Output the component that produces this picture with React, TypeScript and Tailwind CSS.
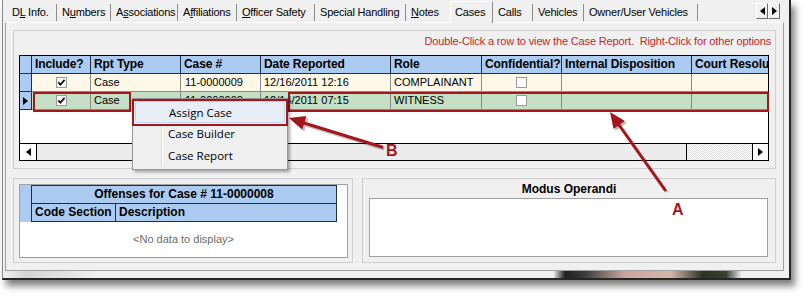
import React from 'react';

const RED = '#a3161c';

const tabs: { w: string; label: React.ReactNode; active?: boolean; noSep?: boolean }[] = [
  { w: 'w-[50px]', label: <>D<u>L</u> Info.</> },
  { w: 'w-[54px]', label: <>N<u>u</u>mbers</> },
  { w: 'w-[67px]', label: <>A<u>s</u>sociations</> },
  { w: 'w-[59px]', label: <>A<u>f</u>filiations</> },
  { w: 'w-[78px]', label: <><u>O</u>fficer Safety</> },
  { w: 'w-[91px]', label: <>Special Handling</> },
  { w: 'w-[44px]', label: <><u>N</u>otes</>, noSep: true },
  { w: 'w-[43px]', label: <>Cases</>, active: true },
  { w: 'w-[40px]', label: <>Calls</> },
  { w: 'w-[51px]', label: <>Vehicles</> },
  { w: 'w-[114px]', label: <>Owner/User Vehicles</> },
];

const headers = ['Include?', 'Rpt Type', 'Case #', 'Date Reported', 'Role', 'Confidential?', 'Internal Disposition', 'Court Resolu'];

const rows = [
  { bg: 'bg-[#fdf8e7]', current: false, type: 'Case', num: '11-0000009', date: '12/16/2011 12:16', role: 'COMPLAINANT' },
  { bg: 'bg-[#c5dfc4]', current: true, type: 'Case', num: '11-0000008', date: '12/14/2011 07:15', role: 'WITNESS' },
];

const cols = 'grid grid-cols-[12px_59px_90px_80px_130px_91px_80px_130px_76px]';

const Check = ({ checked }: { checked: boolean }) => (
  <div className="w-[11px] h-[11px] border border-[#9a9a9a] bg-white flex items-center justify-center">
    {checked && (
      <svg width="9" height="9" viewBox="0 0 9 9">
        <path d="M1.3 4.3 L3.4 6.6 L7.6 1.8" stroke="#111" strokeWidth="1.8" fill="none" />
      </svg>
    )}
  </div>
);

const Tri = ({ dir, size = 4 }: { dir: 'l' | 'r'; size?: number }) => (
  <svg width={size + 1} height={size * 2} viewBox={`0 0 ${size + 1} ${size * 2}`}>
    {dir === 'r' ? (
      <path d={`M0 0 L${size + 1} ${size} L0 ${size * 2} Z`} fill="#000" />
    ) : (
      <path d={`M${size + 1} 0 L0 ${size} L${size + 1} ${size * 2} Z`} fill="#000" />
    )}
  </svg>
);

const App: React.FC = () => {
  return (
    <div className="relative w-[812px] h-[299px] bg-white overflow-hidden pl-[2px] font-['Liberation_Sans',Arial,sans-serif] text-[11px] text-black">
      {/* window */}
      <div className="flex flex-col w-[789px] h-[280px] bg-[#f0f0f0] border-l border-[#8a8a8a] border-r-2 border-b-2 border-r-[#262626] border-b-[#262626] shadow-[4px_6px_7px_rgba(0,0,0,0.5)]">
        {/* tab strip */}
        <div className="h-[22px] shrink-0 flex items-end pl-[4px] pr-[9px] tracking-[-0.2px]">
          {tabs.map((t, i) =>
            t.active ? (
              <div
                key={i}
                className={`${t.w} relative z-10 h-[22px] -mb-px bg-[#f0f0f0] border-l border-t border-white border-r border-r-[#8c8c8c] pl-[4px] pt-[3px] leading-[14px] whitespace-nowrap`}
              >
                {t.label}
              </div>
            ) : (
              <div
                key={i}
                className={`${t.w} h-[17px] mb-px pl-[5px] leading-[16px] whitespace-nowrap ${t.noSep ? '' : 'border-r border-[#8c8c8c]'}`}
              >
                {t.label}
              </div>
            )
          )}
          <div className="ml-auto self-start mt-[3px] flex">
            <div className="w-[12px] h-[16px] bg-[#f0f0f0] border border-white border-r-[#6a6a6a] border-b-[#6a6a6a] flex items-center justify-center">
              <Tri dir="l" />
            </div>
            <div className="w-[12px] h-[16px] bg-[#f0f0f0] border border-white border-r-[#6a6a6a] border-b-[#6a6a6a] flex items-center justify-center">
              <Tri dir="r" />
            </div>
          </div>
        </div>

        {/* tab page */}
        <div className="h-[249px] w-[779px] ml-[2px] shrink-0 border border-[#a0a0a0] border-t-white flex flex-col pt-[7px] pl-[7px]">
          {/* cases group */}
          <div className="w-[763px] h-[139px] border border-[#cfcfcf] pt-[4px] pl-[5px] pr-[4px] flex flex-col">
            <div className="h-[13px] leading-[13px] text-right text-[#c1272d] tracking-[-0.15px]">
              Double-Click a row to view the Case Report.&nbsp; Right-Click for other options
            </div>
            <div className="mt-[7px] w-[750px] h-[106px] border border-black bg-white flex flex-col">
              <div className={`${cols} h-[18px]`}>
                <div className="bg-[#abcbf1] border-r border-b border-[#1f2d4d]" />
                {headers.map((h) => (
                  <div
                    key={h}
                    className="bg-[#abcbf1] border-r border-b border-[#1f2d4d] last:border-r-0 pl-[3px] font-bold text-[12px] tracking-[-0.1px] leading-[17px] whitespace-nowrap"
                  >
                    {h}
                  </div>
                ))}
              </div>
              {rows.map((r) => (
                <div key={r.num} className={`${cols} h-[18px]`}>
                  <div className="bg-[#abcbf1] border-r border-b border-[#1f2d4d] flex items-center pl-[3px]">
                    {r.current && <Tri dir="r" />}
                  </div>
                  <div className={`${r.bg} border-r border-b border-[#8a8a8a] flex items-center justify-center`}>
                    <Check checked />
                  </div>
                  <div className={`${r.bg} border-r border-b border-[#8a8a8a] px-[3px] leading-[17px]`}>{r.type}</div>
                  <div className={`${r.bg} border-r border-b border-[#8a8a8a] px-[4px] leading-[17px]`}>{r.num}</div>
                  <div className={`${r.bg} border-r border-b border-[#8a8a8a] px-[3px] leading-[17px]`}>{r.date}</div>
                  <div className={`${r.bg} border-r border-b border-[#8a8a8a] px-[3px] leading-[17px]`}>{r.role}</div>
                  <div className={`${r.bg} border-r border-b border-[#8a8a8a] flex items-center justify-center`}>
                    <Check checked={false} />
                  </div>
                  <div className={`${r.bg} border-r border-b border-[#8a8a8a]`} />
                  <div className={`${r.bg} border-b border-[#8a8a8a]`} />
                </div>
              ))}
              <div className="flex-1" />
              {/* horizontal scrollbar */}
              <div className="h-[17px] border-t border-black flex">
                <div className="w-[17px] border-r border-black bg-white flex items-center justify-center">
                  <Tri dir="l" />
                </div>
                <div className="w-[650px] border-r border-black bg-[#ececec]" />
                <div className="flex-1 bg-[repeating-conic-gradient(#dedede_0_25%,#ffffff_0_50%)] bg-[length:2px_2px]" />
                <div className="w-[16px] border-l border-black bg-white flex items-center justify-center">
                  <Tri dir="r" />
                </div>
              </div>
            </div>
          </div>

          {/* lower groups */}
          <div className="mt-[9px] flex gap-[9px]">
            <div className="w-[340px] h-[85px] border border-[#cfcfcf] pt-[5px] pl-[5px]">
              <div className="w-[329px] h-[74px] border border-[#a0a0a0] bg-white flex flex-col">
                <div className="grid grid-cols-[12px_84px_221px] grid-rows-[19px_18px] w-[317px] font-bold text-[12px]">
                  <div className="row-span-2 bg-[#abcbf1] border-r border-[#1f2d4d]" />
                  <div className="col-span-2 bg-[#abcbf1] border-t border-r border-b border-[#1f2d4d] text-center leading-[17px]">
                    Offenses for Case # 11-0000008
                  </div>
                  <div className="bg-[#abcbf1] border-r border-b border-[#1f2d4d] px-[3px] leading-[17px] whitespace-nowrap">Code Section</div>
                  <div className="bg-[#abcbf1] border-r border-b border-[#1f2d4d] px-[3px] leading-[17px]">Description</div>
                </div>
                <div className="flex-1 flex items-center justify-center text-[#6b6b6b]">&lt;No data to display&gt;</div>
              </div>
            </div>
            <div className="w-[414px] h-[85px] border border-[#cfcfcf] flex flex-col">
              <div className="h-[19px] leading-[21px] text-center font-bold text-[12px]">Modus Operandi</div>
              <div className="ml-[6px] w-[399px] h-[59px] border border-[#a0a0a0] bg-white" />
            </div>
          </div>
        </div>

        {/* strip below the tab page */}
        <div className="flex-1 bg-[linear-gradient(90deg,#f0f0f0_0%,#d4d4d4_3%,#e6e6e6_9%,#f0f0f0_12%,#f0f0f0_70%,#202020_71.5%,#3a3a3a_74%,#c9a59c_79%,#d6b5ab_85%,#2b3323_89%,#3a4030_92%,#f0f0f0_94%)]" />
      </div>

      {/* red callout boxes */}
      <div className="absolute left-[33px] top-[92px] w-[98px] h-[20px] border-2 border-[#a3161c]" />
      <div className="absolute left-[288px] top-[92px] w-[481px] h-[20px] border-2 border-[#a3161c]" />

      {/* context menu */}
      <div className="absolute left-[132px] top-[98px] w-[156px] h-[72px] bg-[#f0f0f0] border border-[#979797] shadow-[2px_2px_3px_rgba(0,0,0,0.35)] pt-[2px] px-[2px] font-['Open_Sans','Liberation_Sans',sans-serif] text-[11.5px]">
        <div className="absolute left-[28px] top-[2px] bottom-[2px] w-[2px] border-l border-[#dcdcdc] border-r border-r-white" />
        {['Assign Case', 'Case Builder', 'Case Report'].map((m, i) => (
          <div
            key={m}
            className={`relative h-[22px] pl-[33px] leading-[22px] rounded-[3px] ${i === 0 ? 'bg-[#e7eef8] border border-[#c5d7ee] leading-[20px]' : ''}`}
          >
            {m}
          </div>
        ))}
      </div>
      <div className="absolute left-[132px] top-[99px] w-[156px] h-[27px] border-2 border-[#a3161c]" />

      {/* arrows */}
      <svg className="absolute left-0 top-0 pointer-events-none" width="812" height="299" viewBox="0 0 812 299">
        <g opacity="0.25" transform="translate(2 2)">
          <line x1="382" y1="147" x2="304" y2="123" stroke="#000" strokeWidth="3" />
          <polygon points="289,118 306.4,116.1 302.2,129.5" fill="#000" />
          <line x1="665" y1="190" x2="619" y2="125" stroke="#000" strokeWidth="3" />
          <polygon points="610,112 624.9,121.1 613.5,129.1" fill="#000" />
        </g>
        <line x1="382" y1="147" x2="304" y2="123" stroke={RED} strokeWidth="3" strokeLinecap="round" />
        <polygon points="289,118 306.4,116.1 302.2,129.5" fill={RED} />
        <line x1="665" y1="190" x2="619" y2="125" stroke={RED} strokeWidth="3" strokeLinecap="round" />
        <polygon points="610,112 624.9,121.1 613.5,129.1" fill={RED} />
      </svg>
      <span className="absolute left-[386px] top-[143px] leading-[16px] text-[16px] font-bold text-[#a3161c]">B</span>
      <span className="absolute left-[672px] top-[202px] leading-[16px] text-[16px] font-bold text-[#a3161c]">A</span>
    </div>
  );
};

export default App;
